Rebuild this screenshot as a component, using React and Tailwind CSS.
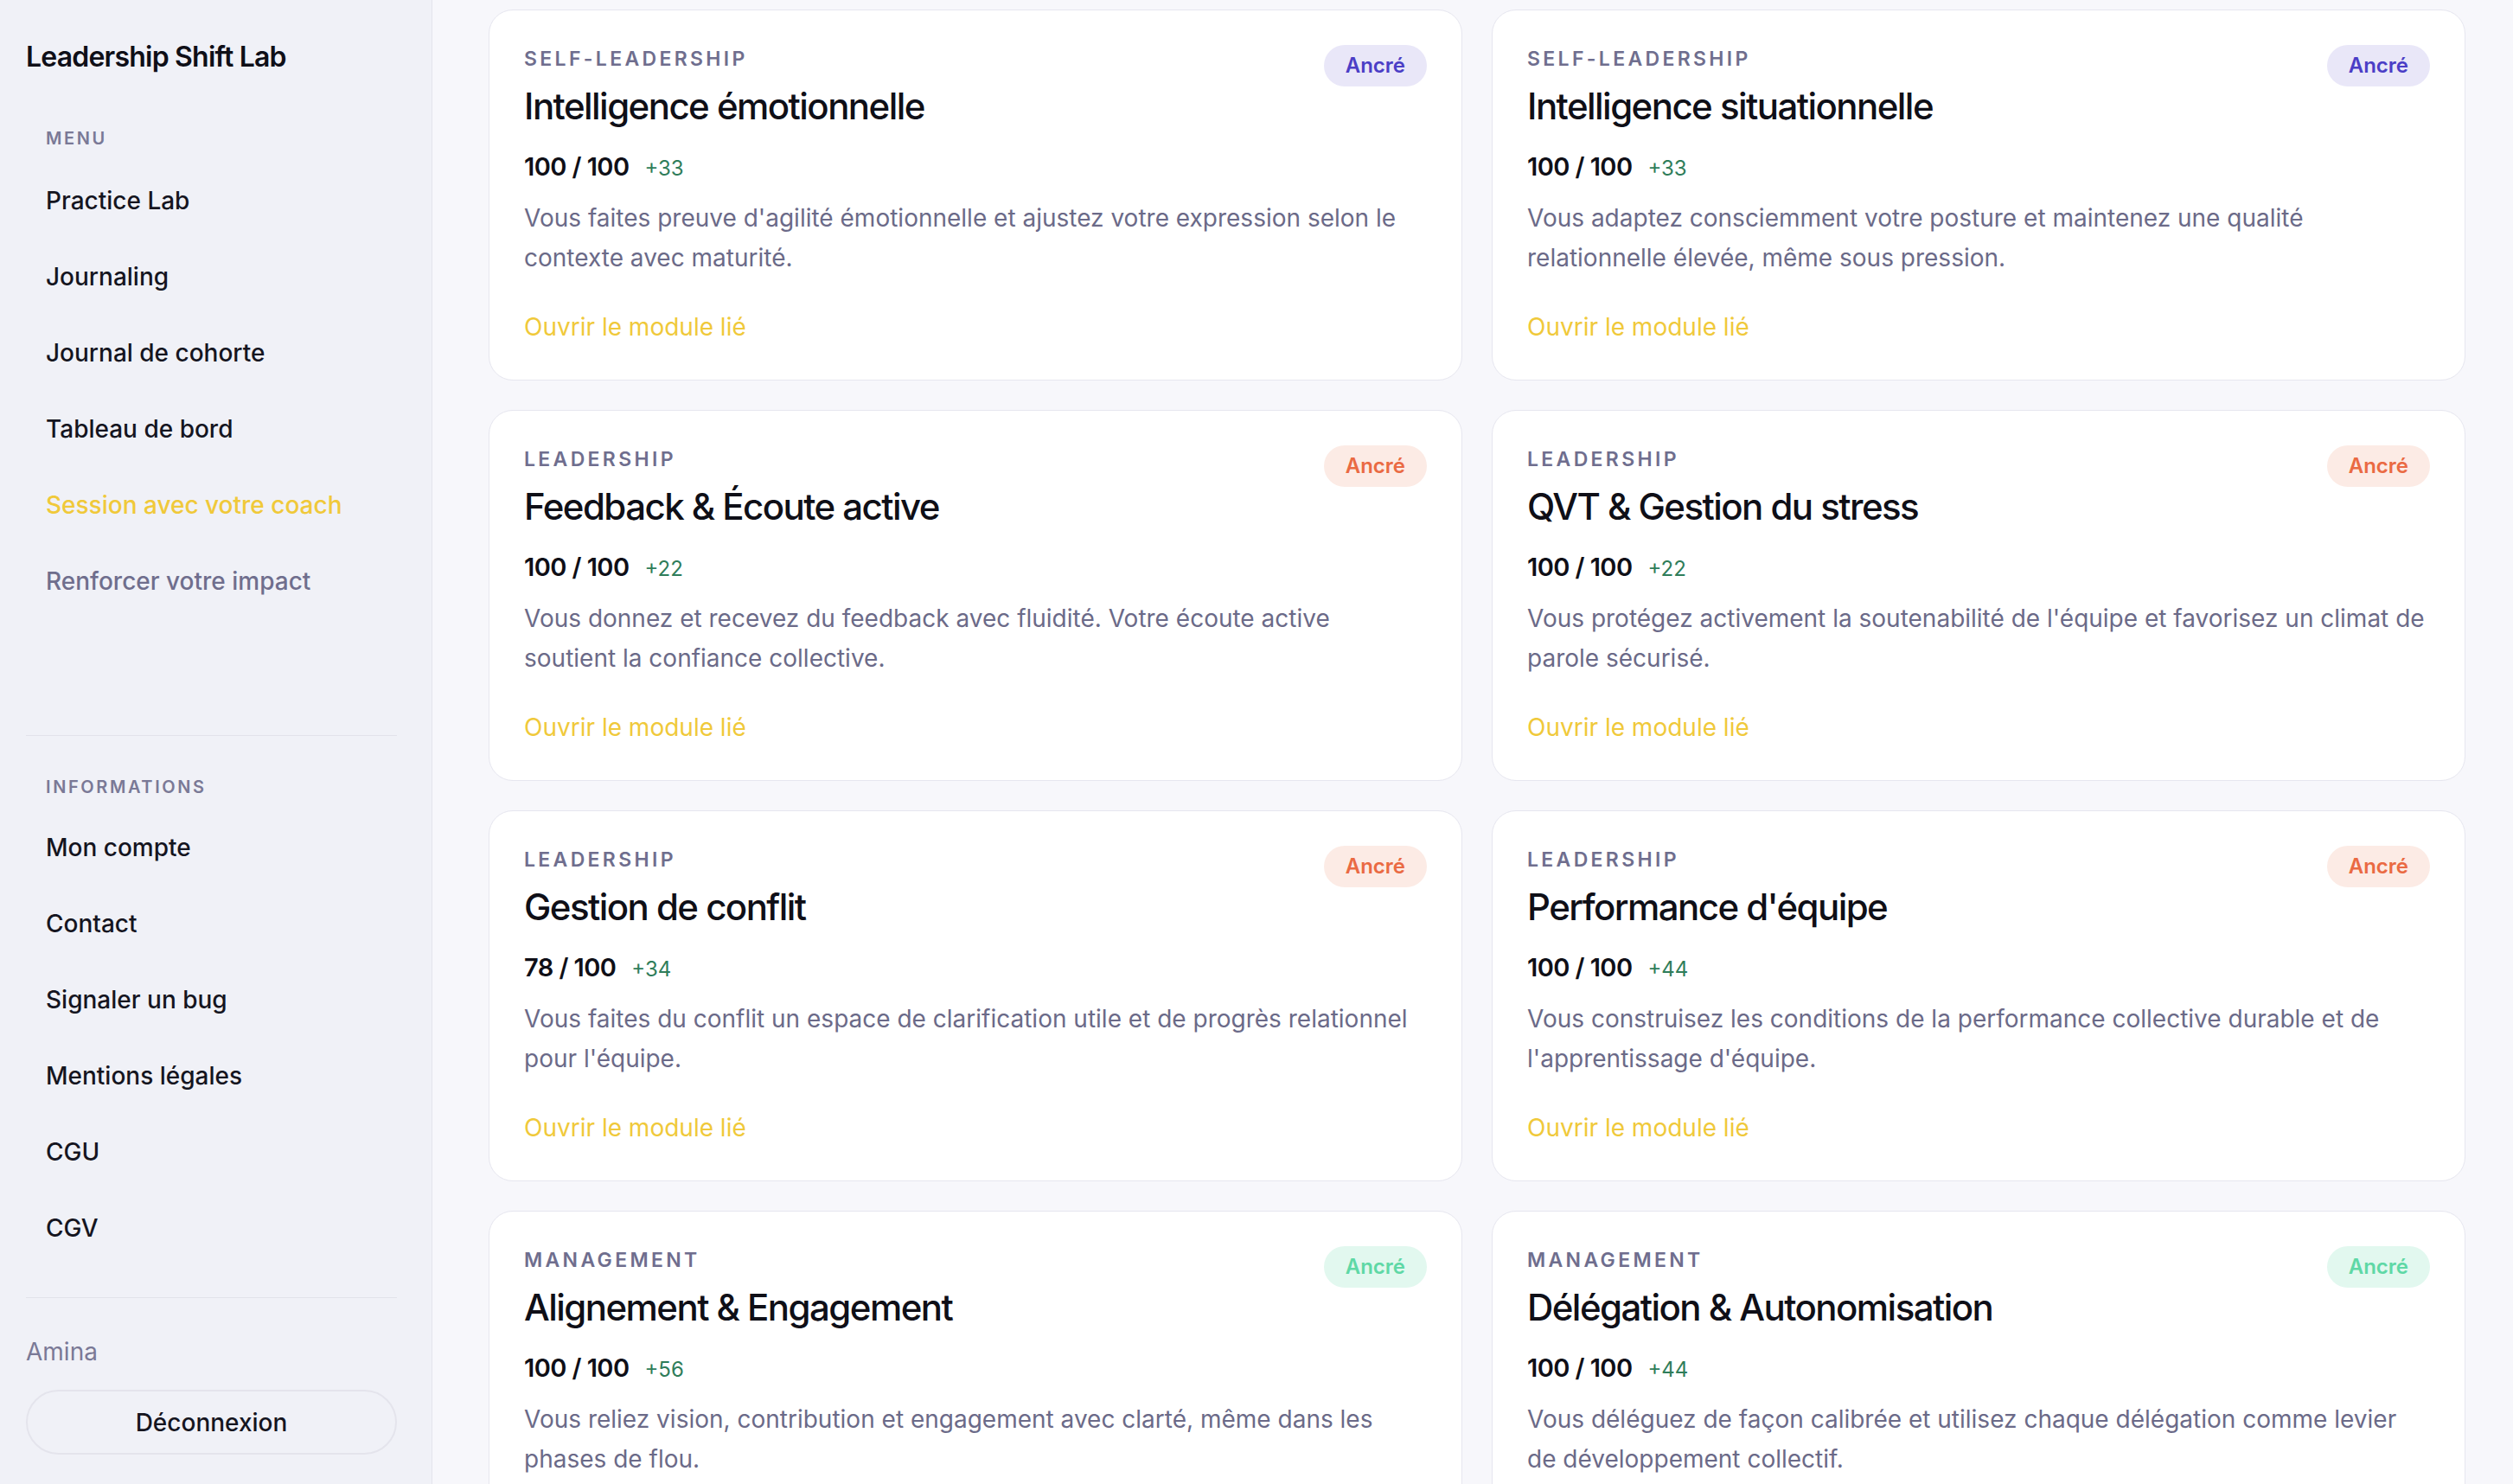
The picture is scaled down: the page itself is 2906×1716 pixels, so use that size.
import React from "react";

const badgeStyles = {
  purple: "bg-[#e9e7f8] text-[#4b3ec6]",
  orange: "bg-[#fcebe5] text-[#ea6a43]",
  green: "bg-[#e2f8ef] text-[#5fd8a6]",
};

const cards = [
  {
    cat: "Self-leadership",
    title: "Intelligence émotionnelle",
    score: "100 / 100",
    delta: "+33",
    desc: "Vous faites preuve d'agilité émotionnelle et ajustez votre expression selon le contexte avec maturité.",
    tone: "purple",
  },
  {
    cat: "Self-leadership",
    title: "Intelligence situationnelle",
    score: "100 / 100",
    delta: "+33",
    desc: "Vous adaptez consciemment votre posture et maintenez une qualité relationnelle élevée, même sous pression.",
    tone: "purple",
  },
  {
    cat: "Leadership",
    title: "Feedback & Écoute active",
    score: "100 / 100",
    delta: "+22",
    desc: "Vous donnez et recevez du feedback avec fluidité. Votre écoute active soutient la confiance collective.",
    tone: "orange",
  },
  {
    cat: "Leadership",
    title: "QVT & Gestion du stress",
    score: "100 / 100",
    delta: "+22",
    desc: "Vous protégez activement la soutenabilité de l'équipe et favorisez un climat de parole sécurisé.",
    tone: "orange",
  },
  {
    cat: "Leadership",
    title: "Gestion de conflit",
    score: "78 / 100",
    delta: "+34",
    desc: "Vous faites du conflit un espace de clarification utile et de progrès relationnel pour l'équipe.",
    tone: "orange",
  },
  {
    cat: "Leadership",
    title: "Performance d'équipe",
    score: "100 / 100",
    delta: "+44",
    desc: "Vous construisez les conditions de la performance collective durable et de l'apprentissage d'équipe.",
    tone: "orange",
  },
  {
    cat: "Management",
    title: "Alignement & Engagement",
    score: "100 / 100",
    delta: "+56",
    desc: "Vous reliez vision, contribution et engagement avec clarté, même dans les phases de flou.",
    tone: "green",
  },
  {
    cat: "Management",
    title: "Délégation & Autonomisation",
    score: "100 / 100",
    delta: "+44",
    desc: "Vous déléguez de façon calibrée et utilisez chaque délégation comme levier de développement collectif.",
    tone: "green",
  },
];

const menu = [
  { label: "Practice Lab", cls: "text-[#15151f]" },
  { label: "Journaling", cls: "text-[#15151f]" },
  { label: "Journal de cohorte", cls: "text-[#15151f]" },
  { label: "Tableau de bord", cls: "text-[#15151f]" },
  { label: "Session avec votre coach", cls: "text-[#f0c93a]" },
  { label: "Renforcer votre impact", cls: "text-[#6f6e8d]" },
];

const infos = ["Mon compte", "Contact", "Signaler un bug", "Mentions légales", "CGU", "CGV"];

function NavItem({ label, cls }) {
  return (
    <a className={`flex h-[88px] items-center pl-[23px] text-[28px] font-medium ${cls}`}>{label}</a>
  );
}

function SectionLabel({ children }) {
  return (
    <div className="pl-[23px] text-[20px] leading-[28px] font-semibold uppercase tracking-[0.13em] text-[#7a7996]">
      {children}
    </div>
  );
}

function Card({ c }) {
  return (
    <div className="rounded-[28px] border border-[#e6e6ef] bg-white px-[40px] pt-[40px] pb-[41px]">
      <div className="flex items-start justify-between">
        <div>
          <div className="text-[23px] leading-[32px] font-semibold uppercase tracking-[0.145em] text-[#6f6e8e]">
            {c.cat}
          </div>
          <div className="mt-[13px] text-[42px] leading-[52px] font-medium tracking-[-0.037em] text-[#0f0f17]">
            {c.title}
          </div>
        </div>
        <span
          className={`flex h-[48px] items-center rounded-full px-[25px] text-[24px] font-semibold ${badgeStyles[c.tone]}`}
        >
          Ancré
        </span>
      </div>
      <div className="mt-[24px] flex items-baseline leading-[40px]">
        <span className="text-[29px] font-semibold tracking-[-0.02em] text-[#0f0f17]">{c.score}</span>
        <span className="ml-[18px] text-[24px] text-[#2f7d5a]">{c.delta}</span>
      </div>
      <p className="mt-[14px] text-[28px] leading-[46px] text-[#6b6a88]">{c.desc}</p>
      <a className="mt-[37px] block text-[28px] leading-[40px] text-[#f0c93a]">Ouvrir le module lié</a>
    </div>
  );
}

export default function App() {
  return (
    <div
      className="flex h-screen w-full overflow-hidden bg-[#f7f7fb]"
      style={{ fontFamily: "Inter, 'Noto Sans', sans-serif" }}
    >
      <aside className="flex h-full w-[500px] shrink-0 flex-col border-r border-[#e4e4ec] bg-[#f0f1f7] pt-[46px] pb-[34px] pl-[30px] pr-[40px]">
        <div className="text-[32px] leading-[40px] font-semibold tracking-[-0.025em] text-[#0f0f17]">
          Leadership Shift Lab
        </div>
        <nav className="mt-[60px] flex flex-col">
          <SectionLabel>Menu</SectionLabel>
          <div className="mt-[14px] flex flex-col">
            {menu.map((m) => (
              <NavItem key={m.label} label={m.label} cls={m.cls} />
            ))}
          </div>
        </nav>
        <div className="flex-1" />
        <div className="border-t border-[#e2e2ea] pt-[45px]">
          <SectionLabel>Informations</SectionLabel>
          <div className="mt-[12px] flex flex-col">
            {infos.map((m) => (
              <NavItem key={m} label={m} cls="text-[#15151f]" />
            ))}
          </div>
        </div>
        <div className="mt-[36px] border-t border-[#e2e2ea] pt-[42px]">
          <div className="text-[28px] leading-[40px] text-[#7a7996]">Amina</div>
          <button className="mt-[24px] flex h-[75px] w-full items-center justify-center rounded-full border-2 border-[#e4e4ec] text-[28px] font-medium text-[#15151f]">
            Déconnexion
          </button>
        </div>
      </aside>
      <main className="min-w-0 flex-1 overflow-hidden pt-[11px] pl-[65px] pr-[55px]">
        <div className="grid grid-cols-2 gap-[34px]">
          {cards.map((c) => (
            <Card key={c.title} c={c} />
          ))}
        </div>
      </main>
    </div>
  );
}
